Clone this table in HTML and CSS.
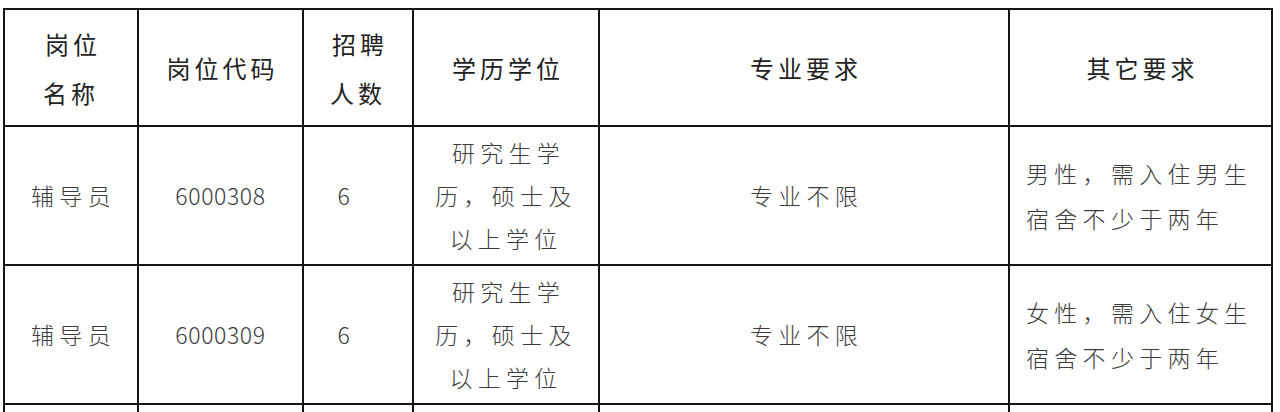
FILE: index.html
```
<!DOCTYPE html>
<html lang="zh-CN">
<head>
<meta charset="utf-8">
<title>岗位表</title>
<link rel="stylesheet" href="styles.css">
</head>
<body>
<table class="jobs">
  <colgroup>
    <col class="c1"><col class="c2"><col class="c3"><col class="c4"><col class="c5"><col class="c6">
  </colgroup>
  <thead>
    <tr class="head">
      <th>岗位<br>名称</th>
      <th>岗位代码</th>
      <th>招聘<br>人数</th>
      <th>学历学位</th>
      <th>专业要求</th>
      <th>其它要求</th>
    </tr>
  </thead>
  <tbody>
    <tr class="row">
      <td>辅导员</td>
      <td class="num">6000308</td>
      <td class="num count">6</td>
      <td class="edu">研究生学<br>历，硕士及<br>以上学位</td>
      <td>专业不限</td>
      <td class="other">男性，需入住男生<br>宿舍不少于两年</td>
    </tr>
    <tr class="row">
      <td>辅导员</td>
      <td class="num">6000309</td>
      <td class="num count">6</td>
      <td class="edu">研究生学<br>历，硕士及<br>以上学位</td>
      <td>专业不限</td>
      <td class="other">女性，需入住女生<br>宿舍不少于两年</td>
    </tr>
    <tr class="row">
      <td></td><td></td><td></td><td></td><td></td><td></td>
    </tr>
  </tbody>
</table>
</body>
</html>
```
FILE: styles.css
```
html, body {
  margin: 0;
  padding: 0;
  background: #ffffff;
  overflow: hidden;
}
body {
  padding: 8px 0 0 3px;
  font-family: "Noto Sans CJK SC", "Noto Sans", sans-serif;
}
.jobs {
  border-collapse: collapse;
  table-layout: fixed;
  width: 1268px;
}
.c1 { width: 134px; }
.c2 { width: 165px; }
.c3 { width: 110px; }
.c4 { width: 186px; }
.c5 { width: 410px; }
.c6 { width: 263px; }
.jobs th, .jobs td {
  border: 2px solid #151515;
  text-align: center;
  vertical-align: middle;
  padding: 0;
}
.jobs th {
  height: 115px;
  font-weight: 400;
  font-size: 24px;
  line-height: 49px;
  letter-spacing: 4px;
  color: #222;
  text-indent: 4px;
}
.jobs td {
  height: 137px;
  font-size: 23px;
  line-height: 43px;
  letter-spacing: 5.3px;
  text-indent: 5px;
  color: #3c3c3c;
  font-weight: 300;
}
.jobs td.num {
  letter-spacing: 0.6px;
  text-indent: 0;
  font-size: 23px;
}
.jobs td.count {
  padding-right: 28px;
}
.jobs td.other {
  text-align: left;
  text-indent: 0;
  padding-left: 16px;
  line-height: 45px;
}
```
